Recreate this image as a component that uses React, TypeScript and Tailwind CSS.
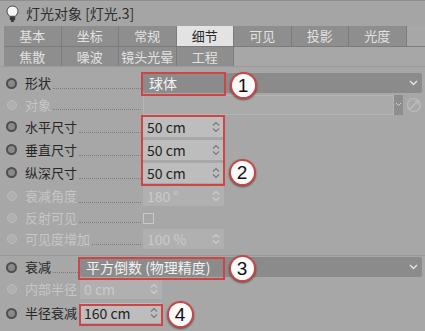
import React from "react";

const font = { fontFamily: '"Noto Sans CJK SC", "Noto Sans", sans-serif' };

function Dot({ off }: { off?: boolean }) {
  return (
    <div className="w-[25px] shrink-0 flex justify-center pl-[1px] pr-[3px]">
      <div
        className={
          off
            ? "w-[10px] h-[10px] rounded-full border border-[#bcbcbc] bg-[#b0b0b0]"
            : "w-[11px] h-[11px] rounded-full border-2 border-[#4e4e4e] bg-[#8a8a8a]"
        }
      />
    </div>
  );
}

function Label({ text, off, w }: { text: string; off?: boolean; w: string }) {
  return (
    <div className={`flex h-full items-center shrink-0 ${w}`}>
      <span className={`whitespace-nowrap text-[13px] ${off ? "text-[#c6c6c6]" : "text-[#262626]"}`}>{text}</span>
      <div className="flex-1 min-w-0 self-end mb-[5px] mx-[2px] border-b border-dotted border-[#7e7e7e]" />
    </div>
  );
}

function Stepper({ off }: { off?: boolean }) {
  const c = off ? "#cdcdcd" : "#777";
  return (
    <svg width="8" height="12" viewBox="0 0 8 12" className="mr-[4px]">
      <path d="M1 4.5 L4 1.5 L7 4.5" fill="none" stroke={c} strokeWidth="1.1" />
      <path d="M1 7.5 L4 10.5 L7 7.5" fill="none" stroke={c} strokeWidth="1.1" />
    </svg>
  );
}

function Chevron({ c = "#e4e4e4" }: { c?: string }) {
  return (
    <svg width="9" height="6" viewBox="0 0 9 6">
      <path d="M1 1 L4.5 4.5 L8 1" fill="none" stroke={c} strokeWidth="1.4" />
    </svg>
  );
}

function NumField({ v, off, w = "w-[81px]" }: { v: string; off?: boolean; w?: string }) {
  return (
    <div
      className={`${w} shrink-0 h-[20px] flex items-center justify-between pl-[4px] ${
        off ? "bg-[#b0b0b0] text-[#cacaca]" : "bg-[#bdbdbd] text-[#232323]"
      }`}
    >
      <span className="text-[14px] leading-none">{v}</span>
      <Stepper off={off} />
    </div>
  );
}

function Badge({ n, x, y }: { n: string; x: number; y: number }) {
  return (
    <div
      className="absolute w-[27px] h-[27px] rounded-full bg-[#c94646] p-[2px] shadow-[0_1px_2px_rgba(0,0,0,0.5)]"
      style={{ left: x - 13.5, top: y - 13.5 }}
    >
      <div className="w-full h-full rounded-full bg-[#fbfbfb] flex items-center justify-center text-[19px] leading-none text-[#111]" style={{ fontFamily: '"Liberation Sans", sans-serif' }}>
        {n}
      </div>
    </div>
  );
}

const tabs1 = ["基本", "坐标", "常规", "细节", "可见", "投影", "光度"];
const tabs2 = ["焦散", "噪波", "镜头光晕", "工程"];

export default function App() {
  return (
    <div className="relative w-[425px] h-[331px] overflow-hidden bg-[#a7a7a7] text-[14px]" style={font}>
      {/* title */}
      <div className="h-[26px] flex items-center gap-[7px] pl-[6px] border-t border-[#8e8e8e] bg-[#a5a5a5]">
        <svg width="13" height="18" viewBox="0 0 13 18">
          <path d="M6.5 1 C3 1 1 3.5 1 6.3 C1 8.6 2.6 9.8 3.6 11.3 L9.4 11.3 C10.4 9.8 12 8.6 12 6.3 C12 3.5 10 1 6.5 1 Z" fill="#f4f4f4" stroke="#444" strokeWidth="1" />
          <rect x="3.8" y="11.8" width="5.4" height="3.2" fill="#3a3a3a" />
          <rect x="4.8" y="15" width="3.4" height="2" rx="1" fill="#3a3a3a" />
        </svg>
        <span className="text-[#2e2e2e] text-[14px]">灯光对象 [灯光.3]</span>
      </div>

      {/* tabs */}
      <div className="pl-[4px] text-[13px]">
        <div className="flex h-[20px]">
          {tabs1.map((t) => (
            <div
              key={t}
              className={`w-[57.5px] flex items-center justify-center border-r border-[#7c7c7c] ${
                t === "细节" ? "bg-[#e3e3e3] text-[#2a2a2a]" : "bg-[#8e8e8e] text-[#e2e2e2]"
              }`}
            >
              {t}
            </div>
          ))}
        </div>
        <div className="flex h-[20px] border-t border-[#7c7c7c]">
          {tabs2.map((t) => (
            <div key={t} className="w-[57.5px] flex items-center justify-center border-r border-[#7c7c7c] bg-[#8e8e8e] text-[#e2e2e2]">
              {t}
            </div>
          ))}
        </div>
      </div>

      {/* attributes */}
      <div className="border-t border-[#9a9a9a] pt-[5px]">
        <div className="flex items-center h-[22px]">
          <Dot />
          <Label text="形状" w="w-[118px]" />
          <div className="flex-1 mr-[3px] h-[20px] bg-[#8b8b8b] rounded-[2px] flex items-center justify-between pl-[6px] pr-[4px]">
            <span className="text-[#f2f2f2]">球体</span>
            <Chevron />
          </div>
        </div>
        <div className="flex items-center h-[21px]">
          <Dot off />
          <Label text="对象" off w="w-[118px]" />
          <div className="w-[251px] h-[20px] bg-[#aaaaaa] border border-[#b5b5b5]" />
          <div className="w-[9px] h-[20px] bg-[#8e8e8e] flex items-center justify-center">
            <svg width="7" height="5" viewBox="0 0 7 5"><path d="M1 1 L3.5 3.5 L6 1" fill="none" stroke="#cfcfcf" strokeWidth="1" /></svg>
          </div>
          <svg width="16" height="16" viewBox="0 0 16 16" className="ml-[3px]">
            <circle cx="8" cy="8" r="6.5" fill="none" stroke="#bdbdbd" strokeWidth="1.2" />
            <path d="M4 12 L12 4 M8 4 L12 4 L12 8" fill="none" stroke="#bdbdbd" strokeWidth="1.2" />
          </svg>
        </div>
        <div className="flex items-center h-[23px]">
          <Dot />
          <Label text="水平尺寸" w="w-[118px]" />
          <NumField v="50 cm" />
        </div>
        <div className="flex items-center h-[23px]">
          <Dot />
          <Label text="垂直尺寸" w="w-[118px]" />
          <NumField v="50 cm" />
        </div>
        <div className="flex items-center h-[23px]">
          <Dot />
          <Label text="纵深尺寸" w="w-[118px]" />
          <NumField v="50 cm" />
        </div>
        <div className="flex items-center h-[24px]">
          <Dot off />
          <Label text="衰减角度" off w="w-[118px]" />
          <NumField v="180 °" off />
        </div>
        <div className="flex items-center h-[20px]">
          <Dot off />
          <Label text="反射可见" off w="w-[118px]" />
          <div className="w-[11px] h-[11px] border border-[#c8c8c8]" />
        </div>
        <div className="flex items-center h-[22px]">
          <Dot off />
          <Label text="可见度增加" off w="w-[118px]" />
          <NumField v="100 %" off />
        </div>

        <div className="h-[6px] border-b border-[#999]" />

        <div className="flex items-center h-[22px]">
          <Dot />
          <Label text="衰减" w="w-[55px]" />
          <div className="flex-1 mr-[3px] h-[20px] bg-[#8b8b8b] rounded-[2px] flex items-center justify-between pl-[6px] pr-[4px]">
            <span className="text-[#f2f2f2]">平方倒数 (物理精度)</span>
            <Chevron />
          </div>
        </div>
        <div className="flex items-center h-[22px]">
          <Dot off />
          <Label text="内部半径" off w="w-[55px]" />
          <NumField v="0 cm" off w="w-[82px]" />
        </div>
        <div className="flex items-center h-[24px] mt-[1px]">
          <Dot />
          <Label text="半径衰减" w="w-[55px]" />
          <NumField v="160 cm" w="w-[82px]" />
        </div>
      </div>

      {/* callout boxes */}
      <div className="absolute left-[141px] top-[72px] w-[85px] h-[24px] border-2 border-[#cf4545]" />
      <div className="absolute left-[141px] top-[115px] w-[84px] h-[71px] border-2 border-[#cf4545]" />
      <div className="absolute left-[78px] top-[257px] w-[147px] h-[23px] border-2 border-[#cf4545]" />
      <div className="absolute left-[79px] top-[304px] w-[84px] h-[22px] border-2 border-[#cf4545]" />

      <Badge n="1" x={243} y={85} />
      <Badge n="2" x={242} y={172} />
      <Badge n="3" x={242} y={268} />
      <Badge n="4" x={180} y={314} />
    </div>
  );
}
